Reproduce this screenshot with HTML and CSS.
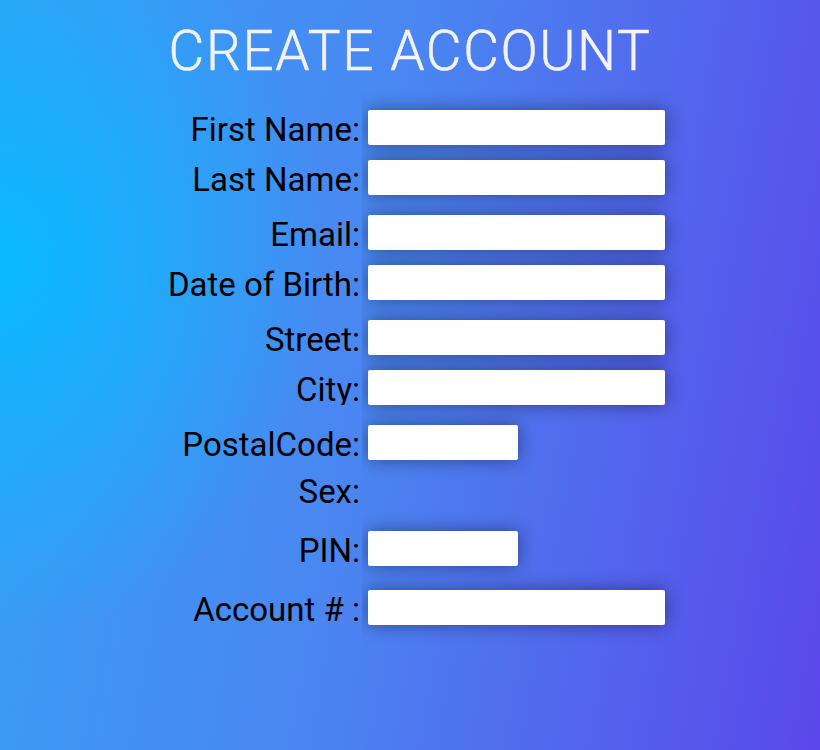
FILE: index.html
```html
<!DOCTYPE html>
<html>
<head>
<meta charset="utf-8">
<link rel="stylesheet" href="styles.css">
</head>
<body>
<div class="page">
  <h1 class="title">CREATE ACCOUNT</h1>
  <form class="form">
    <div class="row g15"><label class="label">First Name:</label><div class="field"><input class="input" type="text"></div></div>
    <div class="row g15"><label class="label">Last Name:</label><div class="field"><input class="input" type="text"></div></div>
    <div class="row g20"><label class="label">Email:</label><div class="field"><input class="input" type="text"></div></div>
    <div class="row g15"><label class="label">Date of Birth:</label><div class="field"><input class="input" type="text"></div></div>
    <div class="row g20"><label class="label">Street:</label><div class="field"><input class="input" type="text"></div></div>
    <div class="row g15"><label class="label">City:</label><div class="field"><input class="input" type="text"></div></div>
    <div class="row g20"><label class="label">PostalCode:</label><div class="field"><input class="input short" type="text"></div></div>
    <div class="row g12"><label class="label">Sex:</label><div class="field empty"></div></div>
    <div class="row g24"><label class="label">PIN:</label><div class="field"><input class="input short" type="text"></div></div>
    <div class="row g24 last"><label class="label">Account # :</label><div class="field"><input class="input" type="text"></div></div>
  </form>
</div>
</body>
</html>
```
FILE: styles.css
```css
html, body {
  margin: 0;
  padding: 0;
  height: 100%;
}
html, body, .label {
  background:
    radial-gradient(ellipse 40% 50% at 0% 35%, rgba(10, 186, 255, 1), rgba(10, 186, 255, 0)),
    linear-gradient(100deg, #36a1f8 0%, #4a86f1 45%, #5a48ea 100%);
  background-attachment: fixed;
}
body {
  font-family: Roboto, "Liberation Sans", sans-serif;
  color: #000;
}
.page {
  padding-top: 24px;
}
.title {
  margin: 0;
  text-align: center;
  font-size: 55px;
  line-height: 54px;
  font-weight: 300;
  color: #f3f3f6;
  letter-spacing: 1.6px;
  -webkit-text-stroke: 0.5px #f3f3f6;
}
.form {
  margin-top: 17px;
  display: flex;
  flex-direction: column;
}
.row {
  display: flex;
}
.label {
  position: relative;
  z-index: 1;
  width: 362px;
  box-sizing: border-box;
  padding-right: 2px;
  text-align: right;
  font-size: 33px;
  line-height: 31px;
  white-space: nowrap;
}
.field {
  margin-left: 6px;
  display: flex;
}
.empty {
  height: 35px;
}
.input {
  display: block;
  width: 297px;
  height: 35px;
  box-sizing: border-box;
  border: none;
  border-radius: 2px;
  background: #fff;
  box-shadow: 0 0 18px rgba(0, 0, 0, 0.42);
  padding: 0 6px;
  font: inherit;
  font-size: 16px;
  outline: none;
}
.input.short {
  width: 150px;
}
.g12 .label { padding-top: 16px; }
.g12 .field { padding-top: 12px; }
.g15 .label { padding-top: 19px; }
.g15 .field { padding-top: 15px; }
.g20 .label { padding-top: 24px; }
.g20 .field { padding-top: 20px; }
.g24 .label { padding-top: 28px; }
.g24 .field { padding-top: 24px; }
.last .label { padding-bottom: 20px; }
```
